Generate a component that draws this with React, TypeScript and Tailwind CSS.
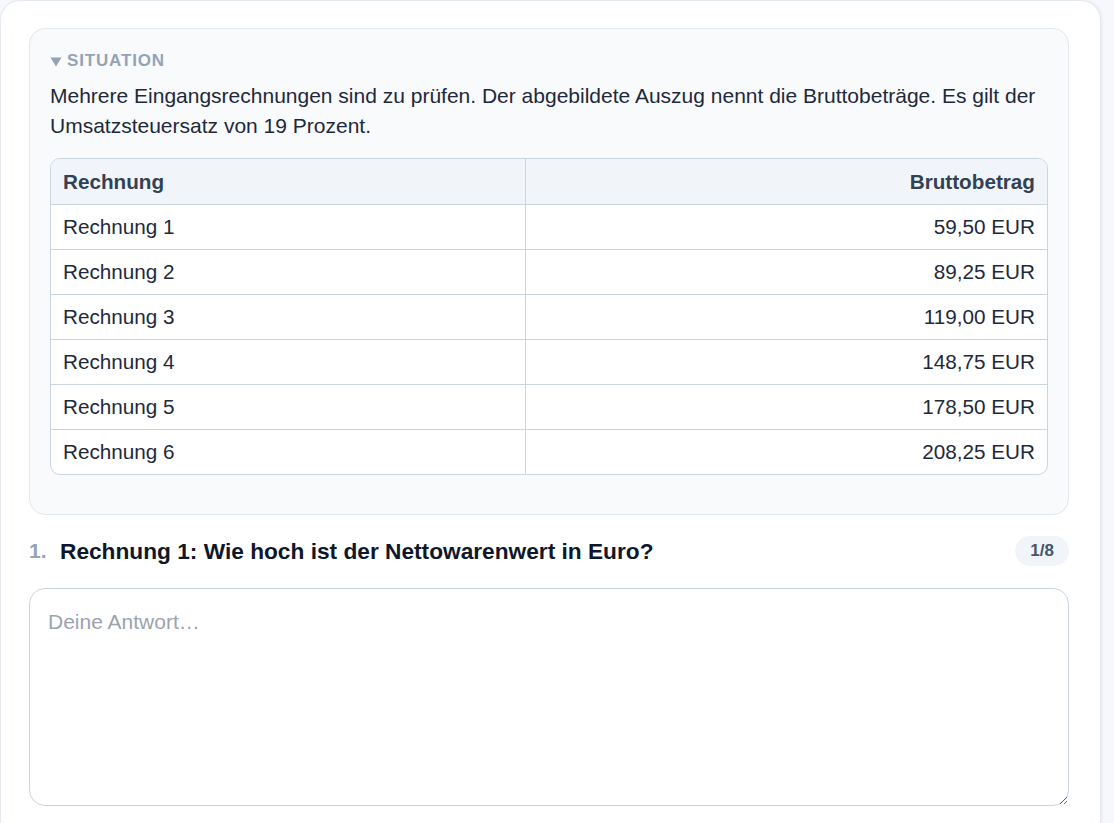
import React from "react";

const rows = [
  ["Rechnung 1", "59,50 EUR"],
  ["Rechnung 2", "89,25 EUR"],
  ["Rechnung 3", "119,00 EUR"],
  ["Rechnung 4", "148,75 EUR"],
  ["Rechnung 5", "178,50 EUR"],
  ["Rechnung 6", "208,25 EUR"],
];

export default function App() {
  return (
    <div
      className="min-h-screen bg-[#f6f8fb] overflow-hidden"
      style={{ fontFamily: '"Liberation Sans", Arial, sans-serif' }}
    >
      <div className="w-[1101px] min-h-[840px] bg-white rounded-[20px] border border-[#e5e9f0] shadow-[1px_0_3px_rgba(15,23,42,0.06)] pt-[27px] pl-[28px] pr-[31px]">
        <div className="rounded-[16px] border border-[#e2e8f0] bg-[#f8fafc] px-5 pt-5 pb-[39px]">
          <div className="flex items-center gap-[5px] text-[17px] leading-6 font-bold tracking-[0.05em] text-[#94a3b8] uppercase">
            <svg width="12" height="10" viewBox="0 0 12 10" className="shrink-0 block w-[12px] h-[10px] mt-[1px]">
              <path d="M0.5 0.5 H11.5 L6 9.5 Z" fill="#94a3b8" />
            </svg>
            <span>Situation</span>
          </div>
          <p className="mt-2 text-[21px] leading-[30px] text-[#1e293b]">
            Mehrere Eingangsrechnungen sind zu prüfen. Der abgebildete Auszug nennt die Bruttobeträge. Es gilt der Umsatzsteuersatz von 19 Prozent.
          </p>
          <div className="mt-[17px] rounded-[10px] border border-[#cbd5e1] overflow-hidden bg-white">
            <table className="w-full border-collapse text-[20.7px] text-[#1e293b]">
              <thead>
                <tr className="bg-[#f1f5f9] h-[45px]">
                  <th className="text-left font-bold text-[#334155] px-3 border-r border-[#cbd5e1] w-[474px]">Rechnung</th>
                  <th className="text-right font-bold text-[#334155] px-3">Bruttobetrag</th>
                </tr>
              </thead>
              <tbody>
                {rows.map(([a, b]) => (
                  <tr key={a} className="h-[45px] border-t border-[#cbd5e1]">
                    <td className="px-3 border-r border-[#cbd5e1]">{a}</td>
                    <td className="px-3 text-right">{b}</td>
                  </tr>
                ))}
              </tbody>
            </table>
          </div>
        </div>

        <div className="mt-[21px] flex items-center justify-between h-[30px]">
          <div className="flex items-center font-bold leading-7">
            <span className="text-[#94a3b8] w-[31px] text-[21px]">1.</span>
            <span className="text-[#0f172a] text-[22.7px]">Rechnung 1: Wie hoch ist der Nettowarenwert in Euro?</span>
          </div>
          <span className="h-[30px] px-[15px] rounded-full bg-[#f1f5f9] text-[#475569] text-[17px] font-bold flex items-center">
            1/8
          </span>
        </div>

        <textarea
          placeholder="Deine Antwort…"
          className="mt-[22px] block w-full h-[218px] rounded-[16px] border border-[#cbd5e1] bg-white px-[18px] py-[19px] text-[21px] leading-7 text-[#1e293b] placeholder:text-[#9ca3af] outline-none"
        />
      </div>
    </div>
  );
}
